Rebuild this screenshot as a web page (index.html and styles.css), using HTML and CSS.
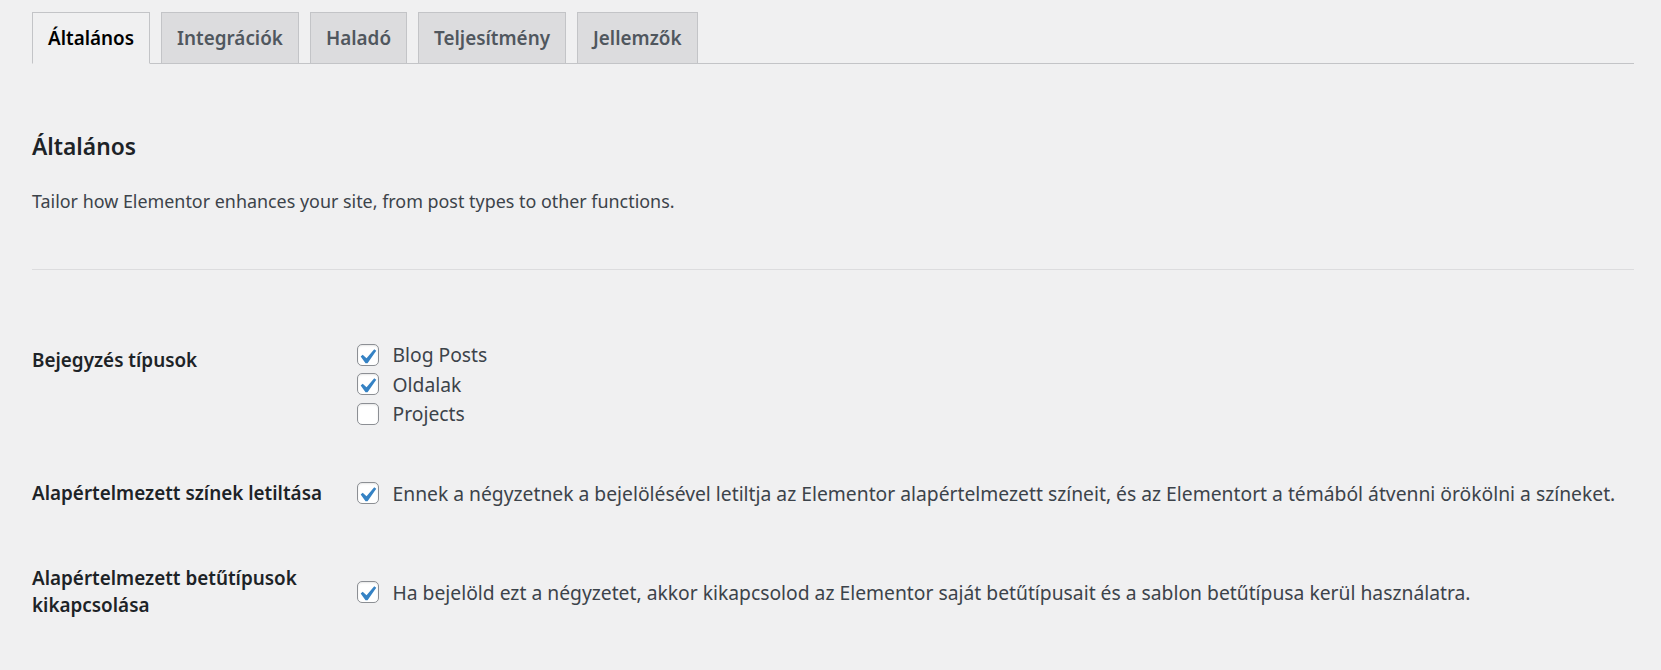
FILE: index.html
```html
<!DOCTYPE html>
<html lang="hu">
<head>
<meta charset="utf-8">
<title>Elementor beállítások</title>
<link rel="stylesheet" href="styles.css">
</head>
<body>
<div class="wrap">
  <nav class="tabs">
    <a class="tab active" href="#">Általános</a>
    <a class="tab" href="#">Integrációk</a>
    <a class="tab" href="#">Haladó</a>
    <a class="tab" href="#">Teljesítmény</a>
    <a class="tab" href="#">Jellemzők</a>
  </nav>

  <h2 class="title">Általános</h2>
  <p class="desc">Tailor how Elementor enhances your site, from post types to other functions.</p>
  <hr class="sep">

  <div class="form">
    <div class="row">
      <div class="th">Bejegyzés típusok</div>
      <div class="td">
        <label class="opt"><span class="cb"><svg viewBox="0 0 20 20"><path d="M14.83 4.89l1.34.94-5.81 8.38H9.02L5.78 9.67l1.34-1.25 2.57 2.4z"/></svg></span>Blog Posts</label>
        <label class="opt"><span class="cb"><svg viewBox="0 0 20 20"><path d="M14.83 4.89l1.34.94-5.81 8.38H9.02L5.78 9.67l1.34-1.25 2.57 2.4z"/></svg></span>Oldalak</label>
        <label class="opt"><span class="cb"></span>Projects</label>
      </div>
    </div>
    <div class="row">
      <div class="th">Alapértelmezett színek letiltása</div>
      <div class="td">
        <label class="opt"><span class="cb"><svg viewBox="0 0 20 20"><path d="M14.83 4.89l1.34.94-5.81 8.38H9.02L5.78 9.67l1.34-1.25 2.57 2.4z"/></svg></span>Ennek a négyzetnek a bejelölésével letiltja az Elementor alapértelmezett színeit, és az Elementort a témából átvenni örökölni a színeket.</label>
      </div>
    </div>
    <div class="row">
      <div class="th">Alapértelmezett betűtípusok<br>kikapcsolása</div>
      <div class="td">
        <label class="opt"><span class="cb"><svg viewBox="0 0 20 20"><path d="M14.83 4.89l1.34.94-5.81 8.38H9.02L5.78 9.67l1.34-1.25 2.57 2.4z"/></svg></span>Ha bejelöld ezt a négyzetet, akkor kikapcsolod az Elementor saját betűtípusait és a sablon betűtípusa kerül használatra.</label>
      </div>
    </div>
  </div>
</div>
</body>
</html>
```
FILE: styles.css
```css
html, body {
  margin: 0;
  padding: 0;
  background: #f0f0f1;
}
body {
  font-family: "Noto Sans", "Open Sans", sans-serif;
  color: #3c434a;
}
.wrap {
  padding: 0 27px 0 32px;
}
.tabs {
  display: flex;
  gap: 11px;
  padding-top: 12px;
  border-bottom: 1px solid #c3c4c7;
}
.tab {
  display: block;
  padding: 7px 15px;
  line-height: 36px;
  font-size: 18.86px;
  font-weight: 600;
  color: #50575e;
  text-decoration: none;
  background: #dcdcde;
  border: 1px solid #c3c4c7;
  margin-bottom: -1px;
  white-space: nowrap;
}
.tab.active {
  background: #f0f0f1;
  color: #000;
  border-bottom-color: #f0f0f1;
}
.title {
  margin: 68px 0 0;
  font-size: 22.8px;
  line-height: 30px;
  font-weight: 600;
  color: #1d2327;
}
.desc {
  margin: 25.6px 0 0;
  font-size: 17.9px;
  line-height: 26px;
  color: #3c434a;
}
.sep {
  margin: 55.6px 0 0;
  border: 0;
  border-top: 1px solid #dcdcde;
  height: 0;
}
.form {
  margin-top: 47.7px;
  display: flex;
  flex-direction: column;
}
.row {
  display: grid;
  grid-template-columns: 325px 1fr;
  align-items: start;
}
.th {
  padding: 29px 15px 29px 0;
  font-size: 18.86px;
  line-height: 27.3px;
  font-weight: 600;
  color: #1d2327;
}
.td {
  align-self: center;
  padding: 22.5px 0;
}
.opt {
  display: flex;
  align-items: center;
  height: 29.3px;
  font-size: 19.3px;
  line-height: 29.3px;
  color: #3c434a;
  white-space: nowrap;
}
.cb {
  position: relative;
  flex: none;
  box-sizing: border-box;
  width: 22px;
  height: 22px;
  margin-right: 13.5px;
  background: #fff;
  border: 1px solid #8c8f94;
  border-radius: 5px;
  box-shadow: inset 0 1px 2px rgba(0, 0, 0, 0.1);
}
.cb svg {
  position: absolute;
  left: -6px;
  top: -3.5px;
  width: 30px;
  height: 30px;
  fill: #3582c4;
}
```
